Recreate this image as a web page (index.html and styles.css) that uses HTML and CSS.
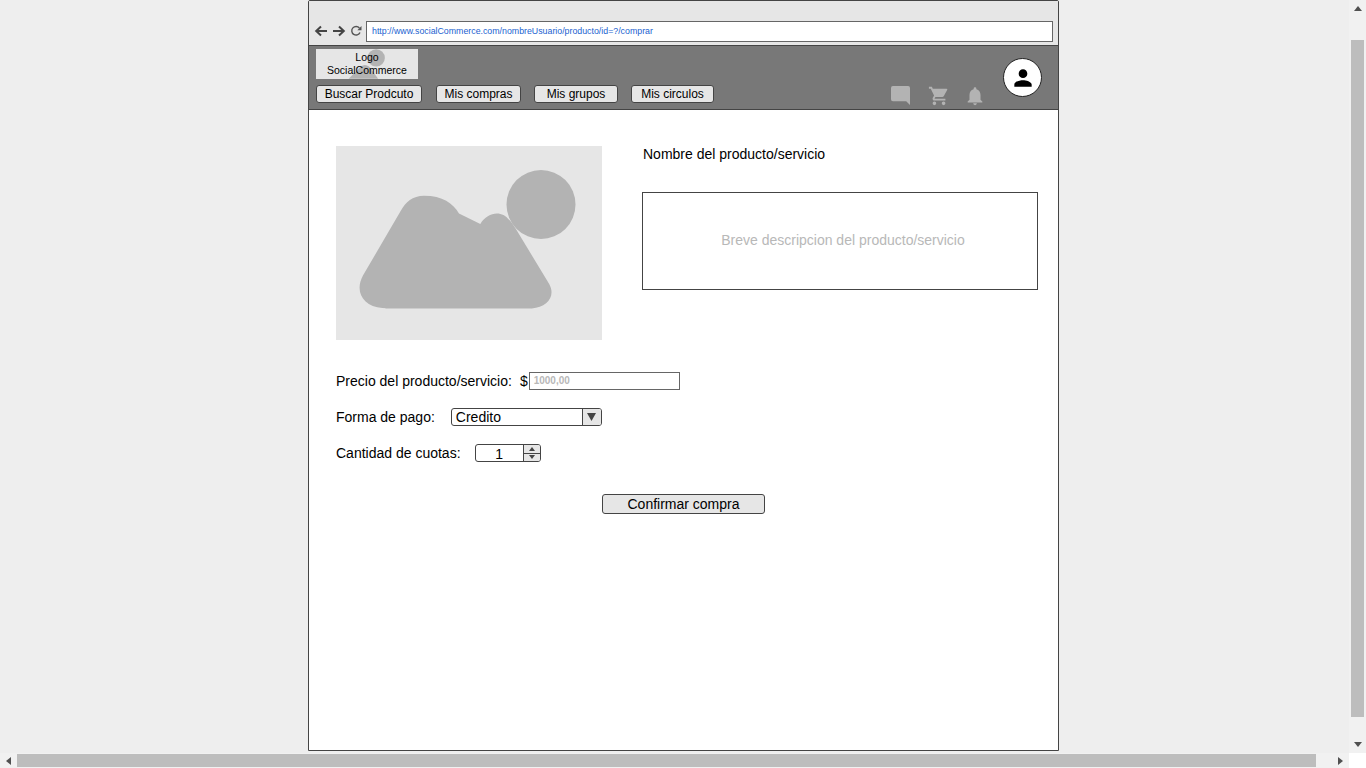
FILE: index.html
```html
<!DOCTYPE html>
<html lang="es">
<head>
<meta charset="utf-8">
<title>Comprar</title>
<link rel="stylesheet" href="styles.css">
</head>
<body>
<div class="screen">
  <main class="canvas">
    <div class="frame">
      <div class="browser">
        <svg class="nav-ico" viewBox="0 0 14 14"><path d="M13 7H3M7 2.5 2.2 7 7 11.500" fill="none" stroke="#444" stroke-width="2"/></svg>
        <svg class="nav-ico" viewBox="0 0 14 14"><path d="M1 7h10M7 2.500 11.800 7 7 11.500" fill="none" stroke="#444" stroke-width="2"/></svg>
        <svg class="nav-ico reload" viewBox="0 0 12 12"><path d="M10 7.500A4.300 4.300 0 1 1 9.400 3" fill="none" stroke="#555" stroke-width="1.400"/><path d="M11.500 1v4.200H7.300z" fill="#555"/></svg>
        <div class="url">http://www.socialCommerce.com/nombreUsuario/producto/id=?/comprar</div>
      </div>
      <header class="topbar">
        <div class="top-left">
          <div class="logo">
            <svg class="logo-art" viewBox="0 0 100 29"><circle cx="59" cy="8.500" r="8.500" fill="#b3b3b3"/><path d="M32 29 44 17q4-3 8 0l9 12z" fill="#b3b3b3"/></svg>
            <span class="logo-text">Logo<br>SocialCommerce</span>
          </div>
          <nav class="menu">
            <button class="menu-btn b1">Buscar Prodcuto</button>
            <button class="menu-btn b2">Mis compras</button>
            <button class="menu-btn b3">Mis grupos</button>
            <button class="menu-btn b4">Mis circulos</button>
          </nav>
        </div>
        <div class="top-right">
          <svg class="top-ico chat" viewBox="0 0 20 20"><path d="M2 0h16a2 2 0 0 1 2 2v18l-4-4H2a2 2 0 0 1-2-2V2a2 2 0 0 1 2-2z" fill="#b3b3b3"/></svg>
          <svg class="top-ico cart" viewBox="0 0 24 24"><path d="M7 18a2 2 0 1 0 0 4 2 2 0 0 0 0-4zM1 2v2h2l3.600 7.590-1.350 2.450A2 2 0 0 0 7 17h12v-2H7.420a.25.25 0 0 1-.25-.25l.03-.12L8.100 13h7.450c.75 0 1.410-.41 1.750-1.030l3.580-6.490A1 1 0 0 0 20 4H5.210l-.94-2H1zm16 16a2 2 0 1 0 0 4 2 2 0 0 0 0-4z" fill="#b3b3b3"/></svg>
          <svg class="top-ico bell" viewBox="0 0 24 24"><path d="M12 22c1.100 0 2-.9 2-2h-4a2 2 0 0 0 2 2zm6-6v-5c0-3.070-1.640-5.640-4.500-6.320V4a1.500 1.500 0 0 0-3 0v.68C7.630 5.360 6 7.920 6 11v5l-2 2v1h16v-1l-2-2z" fill="#b3b3b3"/></svg>
          <div class="avatar">
            <svg class="avatar-ico" viewBox="0 0 24 24"><path d="M12 12a4 4 0 1 0 0-8 4 4 0 0 0 0 8zm0 2c-2.670 0-8 1.340-8 4v2h16v-2c0-2.660-5.330-4-8-4z" fill="#000"/></svg>
          </div>
        </div>
      </header>
      <section class="content">
        <div class="product">
          <svg class="photo" viewBox="0 0 266 194"><rect width="266" height="194" fill="#e6e6e6"/><circle cx="205" cy="58.500" r="34.500" fill="#b3b3b3"/><path d="M71 27c-12 0-19 7-24 16L8 112c-9 17 0 33 20 34.500 0 0 0 0 4 .5h150c16-1 25-13 18-26l-34-58c-8-13-13-17-20-17-6 0-13 4-17 11L107 46c-6-11-17-19-36-19z" fill="#b3b3b3" transform="translate(19.200 24.300) scale(.97 .94)"/></svg>
          <div class="details">
            <h1 class="product-name">Nombre del producto/servicio</h1>
            <div class="description">Breve descripcion del producto/servicio</div>
          </div>
        </div>
        <div class="form">
          <div class="row">
            <span class="label">Precio del producto/servicio:</span>
            <span class="dollar">$</span>
            <div class="price">1000,00</div>
          </div>
          <div class="row">
            <span class="label">Forma de pago:</span>
            <div class="select">
              <span class="select-value">Credito</span>
              <span class="select-arrow"><svg class="arrow" viewBox="0 0 9 8"><path d="M0 0h9L4.500 8z" fill="#444"/></svg></span>
            </div>
          </div>
          <div class="row">
            <span class="label">Cantidad de cuotas:</span>
            <div class="spinner">
              <span class="spin-value">1</span>
              <span class="spin-btns">
                <span class="spin-btn"><svg class="mini" viewBox="0 0 6 4"><path d="M3 0l3 4H0z" fill="#444"/></svg></span>
                <span class="spin-btn"><svg class="mini" viewBox="0 0 6 4"><path d="M0 0h6L3 4z" fill="#444"/></svg></span>
              </span>
            </div>
          </div>
        </div>
        <div class="confirm-wrap"><button class="confirm">Confirmar compra</button></div>
      </section>
    </div>
  </main>
  <div class="vbar">
    <svg class="sb-arrow" viewBox="0 0 8 5"><path d="M4 0l4 5H0z" fill="#505050"/></svg>
    <div class="vthumb"></div>
    <svg class="sb-arrow" viewBox="0 0 8 5"><path d="M0 0h8L4 5z" fill="#505050"/></svg>
  </div>
  <div class="hbar">
    <span class="hcap"><svg class="sb-arrow-h" viewBox="0 0 5 8"><path d="M5 0v8L0 4z" fill="#505050"/></svg></span>
    <div class="hthumb"></div>
    <span class="hcap"><svg class="sb-arrow-h" viewBox="0 0 5 8"><path d="M0 0v8l5-4z" fill="#505050"/></svg></span>
  </div>
  <div class="corner"></div>
</div>
</body>
</html>
```

FILE: styles.css
```css
* { box-sizing: border-box; }
html, body { margin: 0; padding: 0; overflow: hidden; }
body { width: 1366px; height: 768px; font-family: "Liberation Sans", Arial, sans-serif; color: #000; }
button { font-family: inherit; color: #000; cursor: pointer; padding: 0; }

.screen { display: grid; grid-template-columns: 1349px 17px; grid-template-rows: 753px 15px; width: 1366px; height: 768px; }

.canvas { background: #eeeeee; padding-left: 308px; overflow: hidden; }
.frame { width: 751px; height: 751px; border: 1px solid #444; border-radius: 2px 2px 0 0; background: #fff; display: flex; flex-direction: column; }

.browser { height: 44px; flex: none; background: #e6e6e6; display: flex; align-items: flex-start; padding: 20px 5px 0 5px; }
.nav-ico { width: 14px; height: 14px; flex: none; margin: 3px 4px 0 0; }
.reload { width: 12px; height: 12px; margin: 4px 4px 0 0; }
.url { flex: 1; height: 21px; border: 1px solid #666; background: #fff; color: #1a5fd0; font-size: 8.800px; line-height: 19px; padding-left: 5px; white-space: nowrap; overflow: hidden; }

.topbar { height: 65px; flex: none; background: #787878; border-top: 1px solid #444; border-bottom: 1px solid #444; display: flex; justify-content: space-between; padding: 3px 16px 0 7px; }
.top-left { display: flex; flex-direction: column; gap: 6px; }
.logo { position: relative; width: 102px; height: 30px; background: #e6e6e6; display: flex; align-items: center; justify-content: center; }
.logo-art { position: absolute; inset: 0; width: 100%; height: 100%; }
.logo-text { position: relative; font-size: 10.500px; line-height: 13.500px; text-align: center; }
.menu { display: flex; }
.menu-btn { height: 18px; border: 1px solid #444; border-radius: 3px; background: #e6e6e6; font-size: 12px; line-height: 16px; }
.b1 { width: 106px; }
.b2 { width: 85px; margin-left: 14px; }
.b3 { width: 84px; margin-left: 13px; }
.b4 { width: 83px; margin-left: 13px; }

.top-right { display: flex; align-items: flex-start; }
.top-ico { flex: none; margin-top: 37px; }
.chat { width: 19px; height: 19px; }
.cart { width: 22px; height: 22px; margin-left: 18px; margin-top: 36px; }
.bell { width: 22px; height: 22px; margin-left: 14px; margin-top: 36px; }
.avatar { width: 39px; height: 39px; border: 1px solid #222; border-radius: 50%; background: #fff; margin: 9px 0 0 17px; display: flex; align-items: center; justify-content: center; flex: none; }
.avatar-ico { width: 26px; height: 26px; }

.content { flex: 1; background: #fff; padding: 36px 20px 0 27px; }
.product { display: flex; }
.photo { width: 266px; height: 194px; flex: none; display: block; }
.details { margin-left: 40px; flex: 1; }
.product-name { margin: 0 0 0 1px; font-weight: 400; font-size: 14px; line-height: 16px; }
.description { margin-top: 30px; height: 98px; border: 1px solid #444; display: flex; align-items: center; justify-content: center; padding-left: 6px; padding-bottom: 2px; color: #b8b8b8; font-size: 14px; }

.form { margin-top: 32px; display: flex; flex-direction: column; gap: 18px; }
.row { display: flex; align-items: center; height: 18px; font-size: 14px; }
.label { white-space: nowrap; }
.dollar { margin-left: 8px; }
.price { width: 151px; height: 18px; border: 1px solid #666; color: #b8b8b8; font-weight: 700; font-size: 10px; line-height: 16px; padding-left: 4px; margin-left: 1px; }
.select { width: 151px; height: 18px; margin-left: 16px; border: 1px solid #444; border-radius: 3px; display: flex; overflow: hidden; }
.select-value { flex: 1; padding-left: 4px; line-height: 17px; }
.select-arrow { width: 19px; background: #e6e6e6; border-left: 1px solid #444; display: flex; align-items: center; justify-content: center; }
.arrow { width: 9px; height: 8px; }
.spinner { width: 66px; height: 18px; margin-left: 14px; border: 1px solid #444; border-radius: 3px; display: flex; overflow: hidden; }
.spin-value { flex: 1; text-align: center; line-height: 18px; }
.spin-btns { width: 17px; background: #e6e6e6; border-left: 1px solid #444; display: flex; flex-direction: column; }
.spin-btn { flex: 1; display: flex; align-items: center; justify-content: center; }
.spin-btn + .spin-btn { border-top: 1px solid #444; }
.mini { width: 6px; height: 4px; }

.confirm-wrap { margin-top: 32px; padding-left: 266px; }
.confirm { width: 163px; height: 20px; border: 1px solid #444; border-radius: 3px; background: #e6e6e6; font-size: 14px; line-height: 17px; }

.vbar { background: #f1f1f1; display: flex; flex-direction: column; align-items: center; justify-content: space-between; padding: 6px 0; }
.sb-arrow { width: 8px; height: 5px; flex: none; }
.vthumb { width: 13px; height: 677px; background: #bdbdbd; margin: 24px 0 20px; }
.hbar { background: #f1f1f1; display: flex; align-items: center; grid-column: 1; }
.hcap { width: 17px; flex: none; display: flex; justify-content: center; }
.sb-arrow-h { width: 5px; height: 8px; }
.hthumb { width: 1299px; height: 13px; background: #bdbdbd; }
.hbar .hcap:last-child { margin-left: auto; }
.corner { background: #fff; }
```
